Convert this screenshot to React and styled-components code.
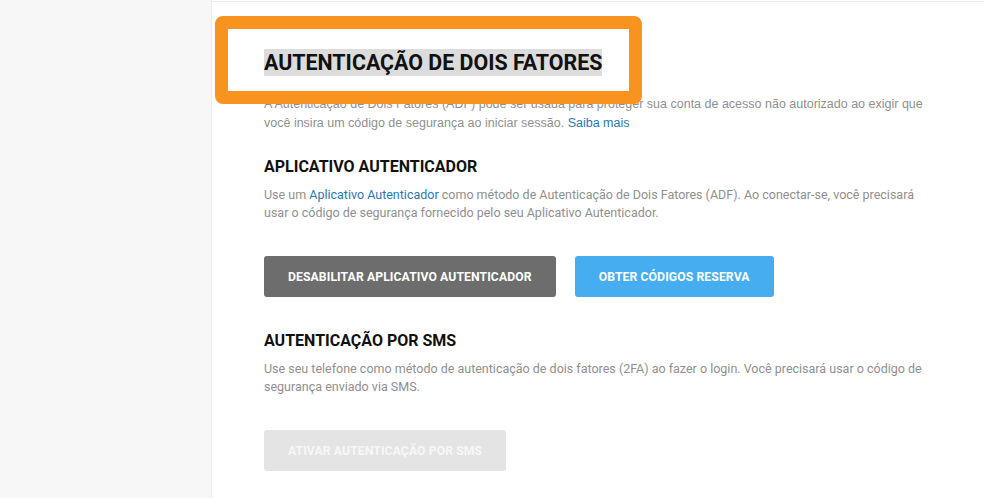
import React from "react";
import styled, { createGlobalStyle } from "styled-components";

const Global = createGlobalStyle`
  html, body { margin: 0; padding: 0; background: #fff; }
  body { font-family: Roboto, "Liberation Sans", sans-serif; }
  * { box-sizing: border-box; }
`;

const Page = styled.div`
  position: relative;
  display: flex;
  width: 984px;
  height: 498px;
  overflow: hidden;
`;

const Sidebar = styled.aside`
  width: 212px;
  flex-shrink: 0;
  background: #f7f7f7;
  border-right: 1px solid #ebebeb;
`;

const Main = styled.main`
  flex: 1;
  margin-top: 1px;
  border-top: 1px solid #ebebeb;
  background: #fff;
  padding: 47px 40px 0 52px;
  display: flex;
  flex-direction: column;
  align-items: flex-start;
`;

const Title = styled.h1`
  margin: 0;
  font-family: Roboto, "Liberation Sans", sans-serif;
  font-size: 21.4px;
  font-weight: 700;
  line-height: 27px;
  color: #111;
  background: #dcdcdc;
`;

const Heading = styled.h2`
  margin: ${(p) => p.$top}px 0 0;
  font-family: Roboto, "Liberation Sans", sans-serif;
  font-size: 16px;
  font-weight: 700;
  line-height: 20px;
  color: #111;
`;

const Text = styled.p`
  margin: ${(p) => p.$top}px 0 0;
  font-family: ${(p) => (p.$system ? '"Liberation Sans", Arial, sans-serif' : 'Roboto, "Liberation Sans", sans-serif')};
  font-size: 12.5px;
  line-height: ${(p) => p.$lh}px;
  color: #8f8f8f;
  max-width: ${(p) => (p.$system ? 676 : 670)}px;
`;

const Link = styled.a`
  color: #2b78b0;
  text-decoration: none;
`;

const ButtonRow = styled.div`
  display: flex;
  gap: 19px;
  margin-top: ${(p) => p.$top}px;
`;

const Button = styled.button`
  height: 41px;
  padding: 0 24px;
  border: none;
  border-radius: 3px;
  font-family: Roboto, "Liberation Sans", sans-serif;
  font-size: 12.2px;
  font-weight: 700;
  text-transform: uppercase;
  letter-spacing: 0.1px;
  cursor: pointer;
  background: ${(p) =>
    p.$variant === "dark" ? "#6d6d6d" : p.$variant === "blue" ? "#45adf0" : "#e4e4e4"};
  color: ${(p) => (p.$variant === "disabled" ? "#f7f7f7" : "#fff")};
`;

const Highlight = styled.div`
  position: absolute;
  left: 215px;
  top: 16px;
  width: 427px;
  height: 88px;
  border: 13px solid #f9931f;
  border-radius: 8px;
  pointer-events: none;
`;

export default function App() {
  return (
    <>
      <Global />
      <Page>
        <Sidebar />
        <Main>
          <Title>AUTENTICAÇÃO DE DOIS FATORES</Title>
          <Text $system $top={19} $lh={19}>
            A Autenticação de Dois Fatores (ADF) pode ser usada para proteger sua conta de acesso não
            autorizado ao exigir que você insira um código de segurança ao iniciar sessão.{" "}
            <Link href="#">Saiba mais</Link>
          </Text>

          <Heading $top={24}>APLICATIVO AUTENTICADOR</Heading>
          <Text $top={9} $lh={18}>
            Use um <Link href="#">Aplicativo Autenticador</Link> como método de Autenticação de Dois
            Fatores (ADF). Ao conectar-se, você precisará usar o código de segurança fornecido pelo seu
            Aplicativo Autenticador.
          </Text>
          <ButtonRow $top={34}>
            <Button $variant="dark">Desabilitar aplicativo autenticador</Button>
            <Button $variant="blue">Obter códigos reserva</Button>
          </ButtonRow>

          <Heading $top={34}>AUTENTICAÇÃO POR SMS</Heading>
          <Text $top={9} $lh={18}>
            Use seu telefone como método de autenticação de dois fatores (2FA) ao fazer o login. Você
            precisará usar o código de segurança enviado via SMS.
          </Text>
          <ButtonRow $top={34}>
            <Button $variant="disabled">Ativar autenticação por SMS</Button>
          </ButtonRow>
        </Main>
        <Highlight />
      </Page>
    </>
  );
}
